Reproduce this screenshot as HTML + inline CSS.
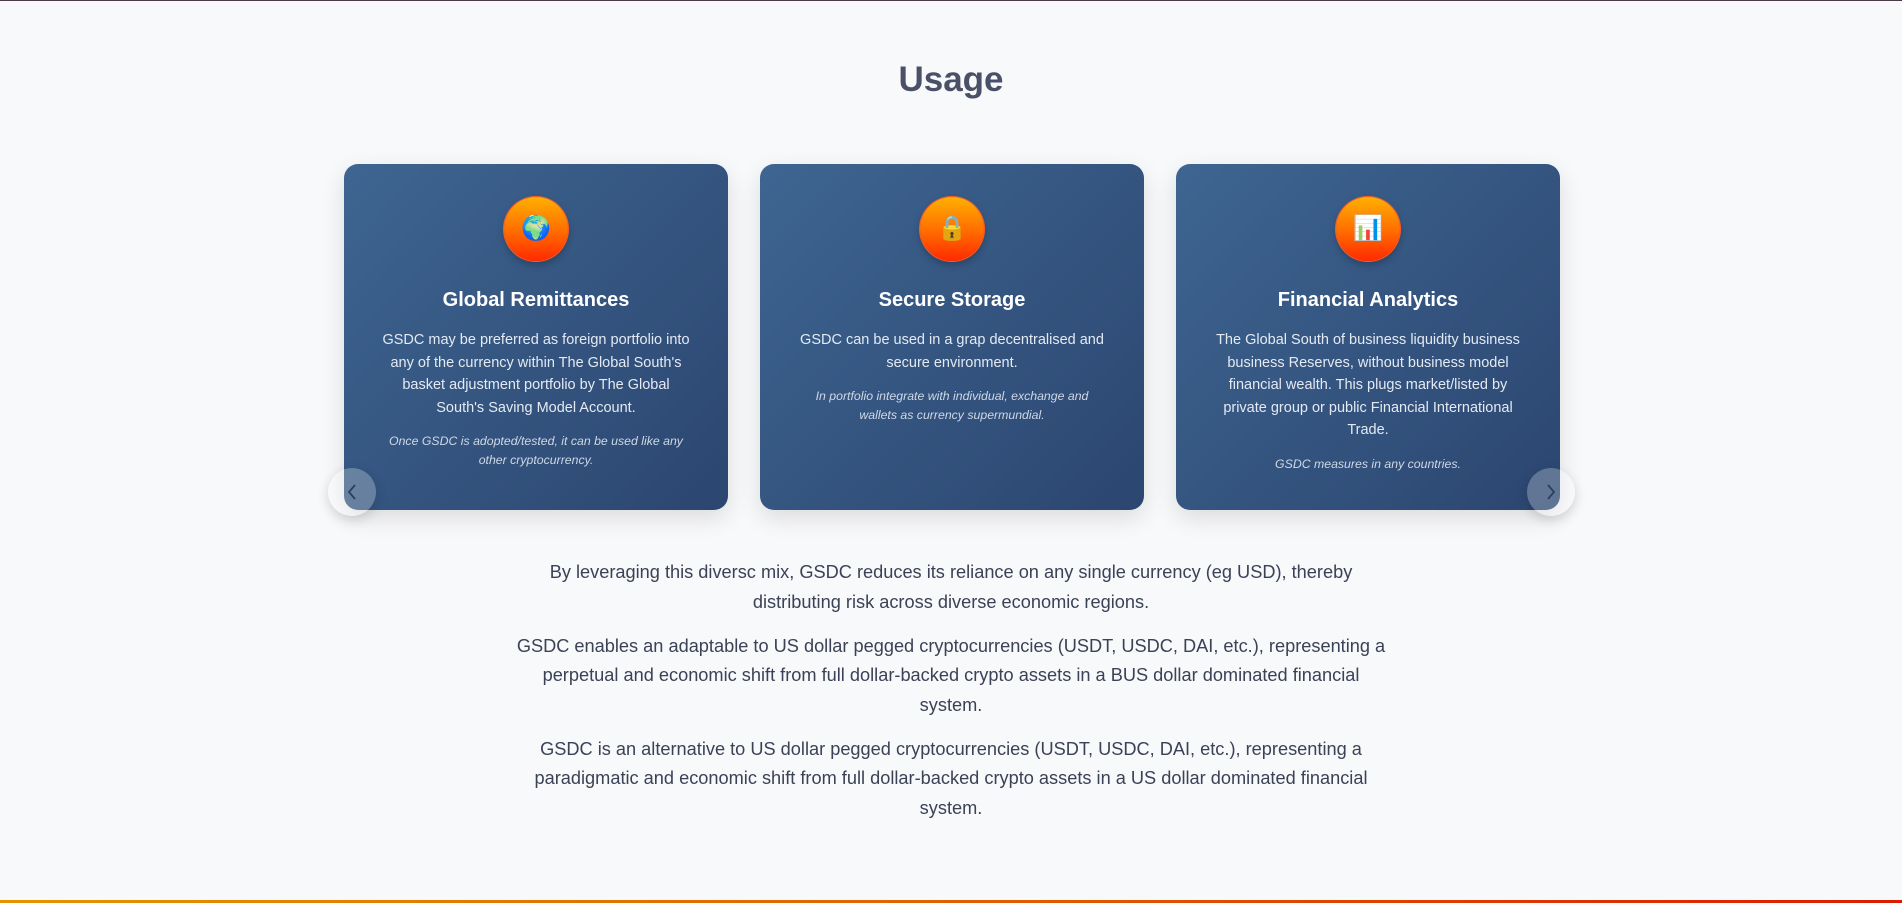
<!DOCTYPE html>
<html><head><meta charset="utf-8"><style>
*{margin:0;padding:0;box-sizing:border-box}
html,body{width:1902px;height:903px;overflow:hidden;background:#f8f9fb;font-family:"Liberation Sans","DejaVu Sans",sans-serif}
.top{position:absolute;left:0;top:0;width:1902px;height:1px;background:#4a3a48}
.bot{position:absolute;left:0;top:900px;width:1902px;height:3px;background:linear-gradient(90deg,#e39400,#e06000 50%,#dc1c00)}
h2{position:absolute;top:60px;width:1902px;text-align:center;font-size:35px;font-weight:bold;color:#4a5068}
.card{position:absolute;top:164px;width:384px;height:346px;border-radius:14px;background:linear-gradient(135deg,#3e6591,#2b4670);box-shadow:0 8px 24px rgba(0,0,0,.12);color:#fff;text-align:center}
.ic{position:absolute;left:160px;top:33px;width:64px;height:64px;border-radius:50%;background:linear-gradient(180deg,#ffb000,#ff6a00 55%,#ff2a00);box-shadow:0 0 0 1px #ff5a20,0 4px 8px rgba(0,0,0,.25);font-size:24px;line-height:64px}
.card h3{position:absolute;top:125px;width:100%;font-size:20px;font-weight:bold}
.card p{position:absolute;top:165px;left:0;right:0;font-size:14.5px;line-height:22.6px;color:#e4eaf2;white-space:nowrap}
.card p i{display:block;font-size:12.3px;line-height:19px;margin-top:13px;color:#cfd8e5}
.arr{position:absolute;top:468px;width:48px;height:48px;border-radius:50%;background:rgba(255,255,255,.25);box-shadow:0 4px 12px rgba(0,0,0,.15)}
.arr svg{position:absolute;left:16px;top:14px}
.txt{position:absolute;top:558px;left:351px;width:1200px;text-align:center;font-size:18.2px;line-height:29.5px;color:#3b4256}
.txt p{margin-bottom:14.5px}
</style></head><body>
<div class="top"></div>
<h2>Usage</h2>
<div class="card" style="left:344px"><div class="ic">🌍</div><h3>Global Remittances</h3><p>GSDC may be preferred as foreign portfolio into<br>any of the currency within The Global South's<br>basket adjustment portfolio by The Global<br>South's Saving Model Account.<i>Once GSDC is adopted/tested, it can be used like any<br>other cryptocurrency.</i></p></div>
<div class="card" style="left:760px"><div class="ic">🔒</div><h3>Secure Storage</h3><p>GSDC can be used in a grap decentralised and<br>secure environment.<i>In portfolio integrate with individual, exchange and<br>wallets as currency supermundial.</i></p></div>
<div class="card" style="left:1176px"><div class="ic">📊</div><h3>Financial Analytics</h3><p>The Global South of business liquidity business<br>business Reserves, without business model<br>financial wealth. This plugs market/listed by<br>private group or public Financial International<br>Trade.<i>GSDC measures in any countries.</i></p></div>
<div class="arr" style="left:328px"><svg width="16" height="20" viewBox="0 0 16 20"><path d="M11 3 L5 10 L11 17" fill="none" stroke="#2b3f60" stroke-width="1.8"/></svg></div>
<div class="arr" style="left:1527px"><svg width="16" height="20" viewBox="0 0 16 20"><path d="M5 3 L11 10 L5 17" fill="none" stroke="#2b3f60" stroke-width="1.8"/></svg></div>
<div class="txt">
<p>By leveraging this diversc mix, GSDC reduces its reliance on any single currency (eg USD), thereby<br>distributing risk across diverse economic regions.</p>
<p>GSDC enables an adaptable to US dollar pegged cryptocurrencies (USDT, USDC, DAI, etc.), representing a<br>perpetual and economic shift from full dollar-backed crypto assets in a BUS dollar dominated financial<br>system.</p>
<p>GSDC is an alternative to US dollar pegged cryptocurrencies (USDT, USDC, DAI, etc.), representing a<br>paradigmatic and economic shift from full dollar-backed crypto assets in a US dollar dominated financial<br>system.</p>
</div>
<div class="bot"></div>
</body></html>
